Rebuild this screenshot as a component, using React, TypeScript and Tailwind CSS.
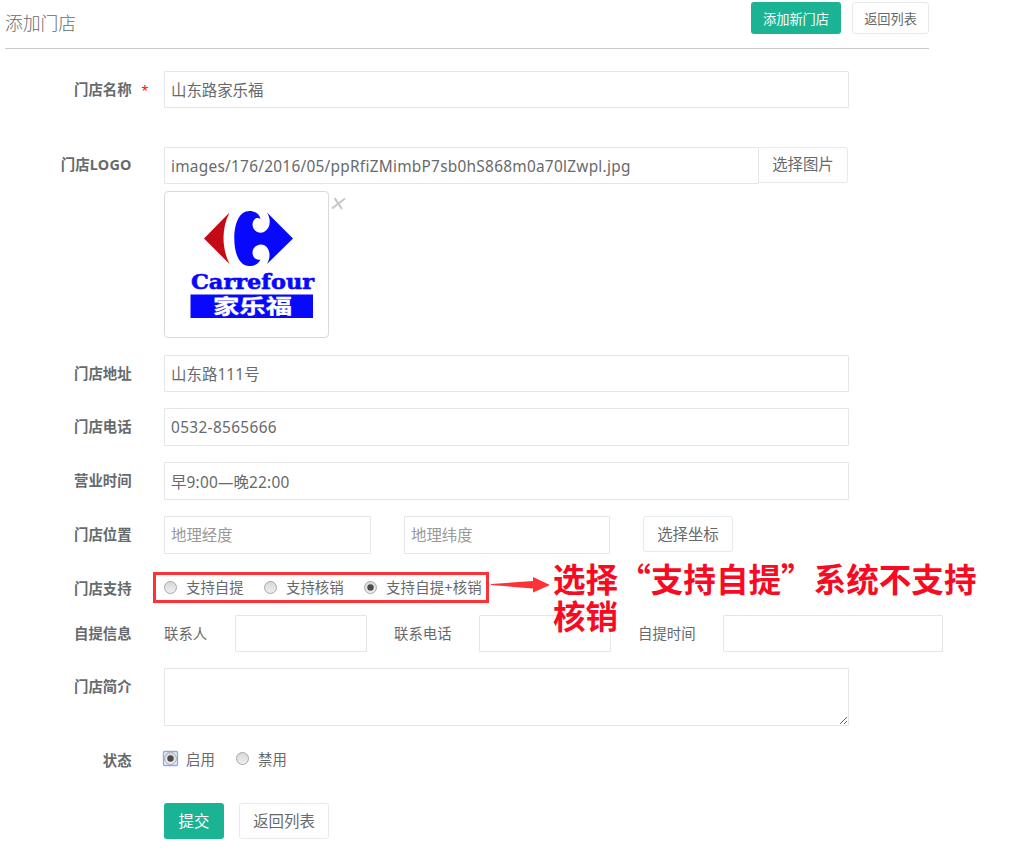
import type { ReactNode } from 'react';

const fieldBase =
  'block shrink-0 border border-[#e5e6e7] rounded-[1px] bg-white px-[6px] text-[15.4px] text-[#676a6c] outline-none placeholder:text-[#999999]';
const buttonBase =
  'shrink-0 rounded-[3px] border border-[#e7eaec] bg-white text-[#676a6c] text-center whitespace-nowrap';

function Row({ label, labelClass, className, children }: { label: string; labelClass: string; className: string; children: ReactNode }) {
  return (
    <div className={`flex items-start ${className}`}>
      <div className={`w-[131.6px] mr-[32.4px] shrink-0 text-right text-[14.4px] font-bold whitespace-nowrap ${labelClass}`}>{label}</div>
      {children}
    </div>
  );
}

function Radio({ checked = false, focused = false }: { checked?: boolean; focused?: boolean }) {
  return (
    <svg className="shrink-0 w-[17px] h-[17px]" viewBox="0 0 17 17">
      <defs>
        <linearGradient id="radioFill" x1="0" y1="0" x2="0" y2="1">
          <stop offset="0" stopColor="#d8d8d8" />
          <stop offset="1" stopColor="#efefef" />
        </linearGradient>
      </defs>
      {focused && <rect x="1.500" y="1.500" width="14" height="14" rx="1" fill="#e9f0fd" stroke="#86abf0" strokeWidth="1.3" />}
      <circle cx="8.5" cy="8.5" r="6" fill="url(#radioFill)" stroke="#a9a9a9" />
      {checked && <circle cx="8.5" cy="8.5" r="3.200" fill="#4c4c4c" />}
    </svg>
  );
}

function CarrefourLogo() {
  return (
    <svg className="w-[163px] h-[145px]" viewBox="165 192 163 145">
      <path d="M229.500 212.500L204 238.500L229.500 264C221.500 248 221.500 228 229.500 212.500Z" fill="#c40a16" />
      <path
        d="M267 212.500L293 238.500L267 264C271 257 270.500 248.500 264 245C259 243 253 246.500 252.500 252C252.300 257 256 261 260.500 259.500C258.500 264 254 266 249.500 266C239.500 266 234.300 254 234.300 238.500C234.300 223 239.500 211 249.500 211C254.500 211 259.500 213.500 260.500 219C256.500 216.500 252.500 219.500 252.500 224.500C252.700 230.500 258.500 234.500 264 232C270.500 228.500 271.500 220 267 212.500Z"
        fill="#0808ff"
      />
      <text x="191" y="289" textLength="123" lengthAdjust="spacingAndGlyphs" fontFamily="'DejaVu Serif', serif" fontWeight="700" fontSize="21" fill="#0808ff" stroke="#0808ff" strokeWidth="0.6">
        Carrefour
      </text>
      <rect x="190.500" y="294.500" width="122.500" height="23.500" fill="#0808ff" />
      <text x="213" y="313.700" textLength="79" lengthAdjust="spacingAndGlyphs" fontFamily="'Noto Sans CJK SC', sans-serif" fontWeight="700" fontSize="20.500" fill="#ffffff" stroke="#ffffff" strokeWidth="0.3">
        家乐福
      </text>
    </svg>
  );
}

export default function App() {
  return (
    <div className="relative w-[1023px] h-[854px] overflow-hidden bg-white text-[#676a6c] font-['Noto_Sans','Noto_Sans_CJK_SC',sans-serif]">
      <header className="ml-[5px] w-[924px] h-[49px] border-b border-[#c9cac9] flex items-start">
        <h1 className="text-[17.8px] font-light leading-[24px] mt-[11px] flex-1">添加门店</h1>
        <button className="mt-[2px] w-[90px] h-8 rounded-[3px] bg-[#1ab394] text-white text-[13.2px] leading-[34px] whitespace-nowrap">添加新门店</button>
        <button className={`${buttonBase} mt-[2px] ml-[11px] w-[77px] h-8 text-[13.2px] leading-[32px]`}>返回列表</button>
      </header>

      <form>
        <div className="flex items-start mt-[22px] h-[37px]">
          <div className="w-[131.6px] shrink-0 text-right text-[14.4px] font-bold leading-[37px]">门店名称</div>
          <div className="w-[32.4px] pl-[10px] shrink-0 text-[12.5px] leading-[39px] text-[#ff0000]">*</div>
          <input className={`${fieldBase} w-[685px] h-[37px]`} defaultValue="山东路家乐福" />
        </div>

        <Row label="门店LOGO" labelClass="leading-[36px] tracking-[0.2px]" className="mt-[39px]">
          <div>
            <div className="flex items-start">
              <input className={`${fieldBase} w-[595px] h-[37px] pt-[2px] tracking-[0.26px]`} defaultValue="images/176/2016/05/ppRfiZMimbP7sb0hS868m0a70lZwpl.jpg" />
              <button type="button" className="w-[89px] h-9 border border-l-0 border-[#e7eaec] rounded-r-[3px] text-[15.4px] leading-[34px]">选择图片</button>
            </div>
            <div className="flex items-start mt-[7px]">
              <div className="w-[165px] h-[147px] border border-[#d9d9d9] rounded-[4px]">
                <CarrefourLogo />
              </div>
              <svg className="w-[15px] h-[13px] ml-[2px] mt-[6px]" viewBox="0 0 15 13" fill="none" stroke="#c8c8c8" strokeWidth="2.200">
                <path d="M1 11.500L14 1.500M3.500 1L11 12" />
              </svg>
            </div>
          </div>
        </Row>

        <Row label="门店地址" labelClass="leading-[38px]" className="mt-[17px] h-[37px]">
          <input className={`${fieldBase} w-[685px] h-[37px] tracking-[0.1px]`} defaultValue="山东路111号" />
        </Row>
        <Row label="门店电话" labelClass="leading-[38px]" className="mt-[16px] h-[38px]">
          <input className={`${fieldBase} w-[685px] h-[38px] pt-px tracking-[0.35px]`} defaultValue="0532-8565666" />
        </Row>
        <Row label="营业时间" labelClass="leading-[38px]" className="mt-[16px] h-[38px]">
          <input className={`${fieldBase} w-[685px] h-[38px] tracking-[0.2px]`} defaultValue="早9:00—晚22:00" />
        </Row>
        <Row label="门店位置" labelClass="leading-[38px]" className="mt-[16px] h-[38px]">
          <input className={`${fieldBase} w-[207px] h-[38px]`} placeholder="地理经度" />
          <input className={`${fieldBase} w-[206px] h-[38px] ml-[33px]`} placeholder="地理纬度" />
          <button type="button" className={`${buttonBase} ml-[33px] w-[90px] h-9 text-[15.4px] leading-[36px]`}>选择坐标</button>
        </Row>

        <Row label="门店支持" labelClass="leading-[33px]" className="mt-[18px] h-[31px]">
          <div className="-ml-[11px] w-[336px] h-[31px] border-[3px] border-[#fc3236] flex items-center pl-[6px] text-[14.4px] leading-[24px] whitespace-nowrap">
            <Radio />
            <span className="ml-[7px] mt-px w-[76px]">支持自提</span>
            <Radio />
            <span className="ml-[7px] mt-px w-[76px]">支持核销</span>
            <Radio checked />
            <span className="ml-[7px] mt-px tracking-[0.2px]">支持自提+核销</span>
          </div>
        </Row>

        <Row label="自提信息" labelClass="leading-[38px]" className="mt-[12px] h-[37px]">
          <span className="w-[71px] shrink-0 text-[14.4px] leading-[37px]">联系人</span>
          <input className={`${fieldBase} w-[132px] h-[37px]`} />
          <span className="ml-[27px] w-[85px] shrink-0 text-[14.4px] leading-[37px]">联系电话</span>
          <input className={`${fieldBase} w-[132px] h-[37px]`} />
          <span className="ml-[27px] w-[85px] shrink-0 text-[14.4px] leading-[37px]">自提时间</span>
          <input className={`${fieldBase} w-[220px] h-[37px]`} />
        </Row>

        <Row label="门店简介" labelClass="leading-[38px]" className="mt-[16px] h-[58px]">
          <textarea className={`${fieldBase} w-[685px] h-[58px] resize`} />
        </Row>

        <Row label="状态" labelClass="leading-[28px]" className="mt-[21px] h-[26px]">
          <div className="-ml-[2px] flex items-start text-[14.4px] leading-[26px]">
            <div className="mt-[3px]"><Radio checked focused /></div>
            <span className="ml-[7px] w-[48px]">启用</span>
            <div className="mt-[3px]"><Radio /></div>
            <span className="ml-[7px]">禁用</span>
          </div>
        </Row>

        <div className="flex ml-[164px] mt-[30px] text-[15.4px]">
          <button type="button" className="w-[60px] h-9 rounded-[3px] bg-[#1ab394] text-white leading-[38px]">提交</button>
          <button type="button" className={`${buttonBase} ml-[15px] w-[90px] h-9 leading-[36px]`}>返回列表</button>
        </div>
      </form>

      <svg className="absolute left-[489px] top-[574px] w-[64px] h-[22px]" viewBox="489 574 64 22">
        <path d="M491 584L533 581V577L550 585L533 592.500V588.500L491 585Z" fill="#fc3236" />
      </svg>
      <div className="absolute left-[553px] top-[559px] w-[440px] text-[32.6px] leading-[37px] font-bold text-[#f80b22] font-['Noto_Sans_CJK_SC',sans-serif]">
        <p>选择“支持自提”系统不支持</p>
        <p>核销</p>
      </div>
    </div>
  );
}
